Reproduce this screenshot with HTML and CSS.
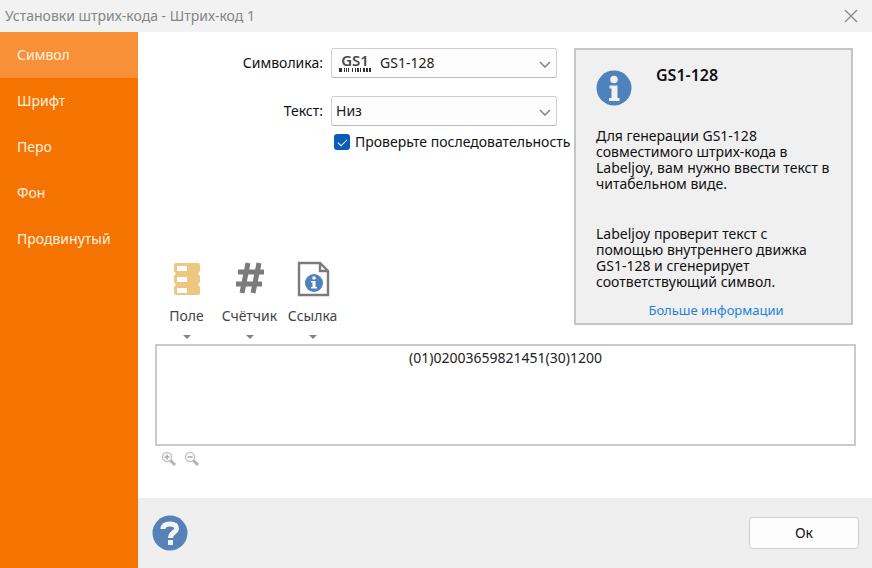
FILE: index.html
```html
<!DOCTYPE html>
<html lang="ru">
<head>
  <meta charset="UTF-8">
  <meta name="viewport" content="width=device-width, initial-scale=1.0">
  <title>Установки штрих-кода - Штрих-код 1</title>
  <link rel="stylesheet" href="styles.css">
</head>
<body>

  <header class="titlebar">
    <h1>Установки штрих-кода - Штрих-код 1</h1>
    <button class="close" type="button" aria-label="Закрыть">
      <svg width="14" height="14" viewBox="0 0 14 14"><path d="M1 1L13 13M13 1L1 13" stroke="#858585" stroke-width="1.2" fill="none"/></svg>
    </button>
  </header>

  <div class="window">
    <nav class="sidebar">
      <a href="#symbol" class="active">Символ</a>
      <a href="#font">Шрифт</a>
      <a href="#pen">Перо</a>
      <a href="#background">Фон</a>
      <a href="#advanced">Продвинутый</a>
    </nav>

    <div class="content">
      <main>
        <div class="top">
          <div class="left">
            <div class="form">
              <label for="symbology">Символика:</label>
              <div class="select-wrap with-logo">
                <svg class="gs1-logo" width="34" height="24" viewBox="0 0 34 24">
                  <text x="17" y="17" text-anchor="middle">GS1</text>
                  <path d="M1 21H4M6 21H7M8 21H9M10 21H11M14 21H15M17 21H18M19 21H21M22 21H23M25 21H27M28 21H30M31 21H33" stroke="#333" stroke-width="4"/>
                </svg>
                <select id="symbology">
                  <option>GS1-128</option>
                </select>
                <svg class="arrow" width="12" height="7" viewBox="0 0 12 7"><path d="M1 1L6 6L11 1" stroke="#777" stroke-width="1.3" fill="none"/></svg>
              </div>

              <label for="text">Текст:</label>
              <div class="select-wrap">
                <select id="text">
                  <option>Низ</option>
                </select>
                <svg class="arrow" width="12" height="7" viewBox="0 0 12 7"><path d="M1 1L6 6L11 1" stroke="#777" stroke-width="1.3" fill="none"/></svg>
              </div>
            </div>

            <div class="check">
              <input type="checkbox" id="sequence" checked>
              <label for="sequence">Проверьте последовательность</label>
            </div>

            <div class="tools">
              <button type="button">
                <svg width="36" height="36" viewBox="0 0 36 36">
                  <path d="M7 2H29Q31 2 31 4V10L29 12.500L31 15V21L29 23.500L31 26V32Q31 34 29 34H7Q5 34 5 32V26L7 23.500L5 21V15L7 12.500L5 10V4Q5 2 7 2Z" fill="#edc77f"/>
                  <path d="M8 5H18V10H8ZM8 16H18V21H8ZM8 27H18V32H8Z" fill="#fff"/>
                </svg>
                <span>Поле</span>
                <i class="caret"></i>
              </button>
              <button type="button">
                <svg width="36" height="36" viewBox="0 0 36 36">
                  <path d="M16 2L10 32M27 2L21 32M6 11H32M4 23H30" stroke="#7b7b7b" stroke-width="5" fill="none"/>
                </svg>
                <span>Счётчик</span>
                <i class="caret"></i>
              </button>
              <button type="button">
                <svg width="36" height="36" viewBox="0 0 36 36">
                  <path d="M4 2H25L33 10V34H4Z" fill="#fff" stroke="#7b7b7b" stroke-width="2.4"/>
                  <path d="M25 2V10H33" fill="none" stroke="#7b7b7b" stroke-width="2.4"/>
                  <circle cx="19" cy="22" r="9" fill="#4d82bc"/>
                  <circle cx="19" cy="17" r="1.8" fill="#fff"/>
                  <path d="M16 20H20.5V26H22V27.5H16V26H17.5V21.5H16Z" fill="#fff"/>
                </svg>
                <span>Ссылка</span>
                <i class="caret"></i>
              </button>
            </div>
          </div>

          <aside class="info">
            <div class="info-head">
              <svg width="36" height="36" viewBox="0 0 36 36">
                <circle cx="18" cy="18" r="17.5" fill="#4d82bc"/>
                <circle cx="18" cy="9.5" r="3.8" fill="#f0f0f0"/>
                <path d="M13.5 15.5H21.5V28H23.5V31H13V28H15.5V18.5H13.5Z" fill="#f0f0f0"/>
              </svg>
              <h2>GS1-128</h2>
            </div>
            <p>Для генерации GS1-128<br>совместимого штрих-кода в<br>Labeljoy, вам нужно ввести текст в<br>читабельном виде.</p>
            <p>Labeljoy проверит текст с<br>помощью внутреннего движка<br>GS1-128 и сгенерирует<br>соответствующий символ.</p>
            <a href="#more">Больше информации</a>
          </aside>
        </div>

        <textarea class="data" aria-label="Данные штрих-кода">(01)02003659821451(30)1200</textarea>

        <div class="zoom">
          <button type="button" aria-label="Увеличить">
            <svg width="16" height="16" viewBox="0 0 16 16" fill="none">
              <circle cx="6" cy="6" r="4.5" stroke="#c4c4c4" stroke-width="1.4"/>
              <path d="M3.5 6H8.5M6 3.5V8.5" stroke="#aaa" stroke-width="1.5"/>
              <path d="M9.5 9.5L14 14" stroke="#b5b5b5" stroke-width="3"/>
            </svg>
          </button>
          <button type="button" aria-label="Уменьшить">
            <svg width="16" height="16" viewBox="0 0 16 16" fill="none">
              <circle cx="6" cy="6" r="4.5" stroke="#c4c4c4" stroke-width="1.4"/>
              <path d="M3.5 6H8.5" stroke="#aaa" stroke-width="1.5"/>
              <path d="M9.5 9.5L14 14" stroke="#b5b5b5" stroke-width="3"/>
            </svg>
          </button>
        </div>
      </main>

      <footer>
        <button class="help" type="button" aria-label="Справка">
          <svg width="36" height="36" viewBox="0 0 36 36">
            <circle cx="18" cy="18" r="17.5" fill="#5682b8"/>
            <path d="M11 14C11 10.5 14 9 18 9C22 9 24.5 10.5 24.5 13.5C24.5 17.5 18.5 17 18.5 23" stroke="#f5f5f5" stroke-width="5" fill="none"/>
            <rect x="16" y="25" width="5" height="5" fill="#f5f5f5"/>
          </svg>
        </button>
        <button class="ok" type="button">Ок</button>
      </footer>
    </div>
  </div>

</body>
</html>
```

FILE: styles.css
```css
* {
  margin: 0;
  padding: 0;
  box-sizing: border-box;
}

body {
  display: flex;
  flex-direction: column;
  min-height: 100vh;
  font-family: "Noto Sans", "Open Sans", sans-serif;
  font-size: 14px;
  line-height: 20px;
  background: #fff;
  color: #111;
}

button {
  font: inherit;
  color: inherit;
  background: none;
  border: none;
  cursor: pointer;
}

svg {
  display: block;
}

a {
  text-decoration: none;
}

.titlebar {
  display: flex;
  align-items: center;
  justify-content: space-between;
  height: 32px;
  padding: 0 14px 0 5px;
  background: #f2f2f2;
}

.titlebar h1 {
  font-size: 14px;
  font-weight: 400;
  color: #868686;
}

.window {
  display: flex;
  flex: 1;
}

.sidebar {
  flex: 0 0 138px;
  background: #f57300;
}

.sidebar a {
  display: block;
  height: 46px;
  padding-left: 17px;
  line-height: 46px;
  color: #fff2e2;
}

.sidebar a.active {
  background: #f79036;
}

.content {
  display: flex;
  flex: 1;
  flex-direction: column;
  min-width: 0;
}

main {
  flex: 1;
  padding: 16px 16px 0 17px;
}

.top {
  display: flex;
  justify-content: space-between;
  margin-right: 3px;
}

.left {
  display: flex;
  flex: 1;
  flex-direction: column;
  min-width: 0;
}

.form {
  display: grid;
  grid-template-columns: 168px 226px;
  column-gap: 8px;
  row-gap: 18px;
  align-items: center;
}

.form > label {
  text-align: right;
}

.select-wrap {
  position: relative;
}

.select-wrap select {
  display: block;
  width: 100%;
  height: 30px;
  padding: 0 24px 0 4px;
  font: inherit;
  color: #222;
  background: #fdfdfd;
  border: 1px solid #d0d0d0;
  border-bottom-color: #b8b8b8;
  border-radius: 3px;
  appearance: none;
}

.with-logo select {
  padding-left: 48px;
}

.gs1-logo {
  position: absolute;
  left: 7px;
  top: 1px;
  z-index: 1;
  font-size: 15px;
  font-weight: 600;
  fill: #4b4b4b;
  pointer-events: none;
}

.arrow {
  position: absolute;
  right: 6px;
  top: 13px;
  pointer-events: none;
}

.check {
  display: flex;
  align-items: center;
  gap: 5px;
  margin-top: 6px;
  padding-left: 179px;
  white-space: nowrap;
}

.check input {
  flex: none;
  width: 16px;
  height: 16px;
  border-radius: 3px;
  background: #0a5cb8;
  appearance: none;
}

.check input:checked::before {
  content: "";
  display: block;
  width: 8px;
  height: 4px;
  margin: 5px 4px;
  border: solid #fff;
  border-width: 0 0 1px 1px;
  transform: rotate(-45deg);
}

.tools {
  display: flex;
  margin-top: auto;
}

.tools button {
  display: flex;
  flex-direction: column;
  align-items: center;
  width: 63px;
  color: #444;
}

.tools span {
  margin-top: 9px;
}

.caret {
  margin: 9px 0 5px;
  border: solid transparent;
  border-width: 4px 4px 0;
  border-top-color: #858585;
}

.info {
  flex: 0 0 279px;
  height: 277px;
  margin-bottom: 19px;
  padding: 17px 15px 0 20px;
  line-height: 16px;
  background: #f0f0f0;
  border: 2px solid #c4c4ca;
}

.info-head {
  display: flex;
  gap: 24px;
  height: 61px;
}

.info-head svg {
  margin-top: 3px;
}

.info h2 {
  font-size: 16px;
  font-weight: 600;
  line-height: 16px;
}

.info p {
  margin-bottom: 34px;
  white-space: nowrap;
}

.info a {
  display: block;
  margin-top: -22px;
  font-size: 13px;
  text-align: center;
  color: #1c82dc;
}

.data {
  display: block;
  width: 100%;
  height: 102px;
  padding: 2px;
  font: inherit;
  color: #222;
  text-align: center;
  border: 2px solid #c9c9cf;
  outline: none;
  resize: none;
}

.zoom {
  display: flex;
  gap: 7px;
  padding: 5px 6px;
}

footer {
  display: flex;
  align-items: center;
  justify-content: space-between;
  height: 70px;
  padding: 0 13px 0 14px;
  background: #efefef;
}

.ok {
  width: 110px;
  height: 32px;
  background: #fdfdfd;
  border: 1px solid #d0d0d0;
  border-radius: 4px;
}
```
